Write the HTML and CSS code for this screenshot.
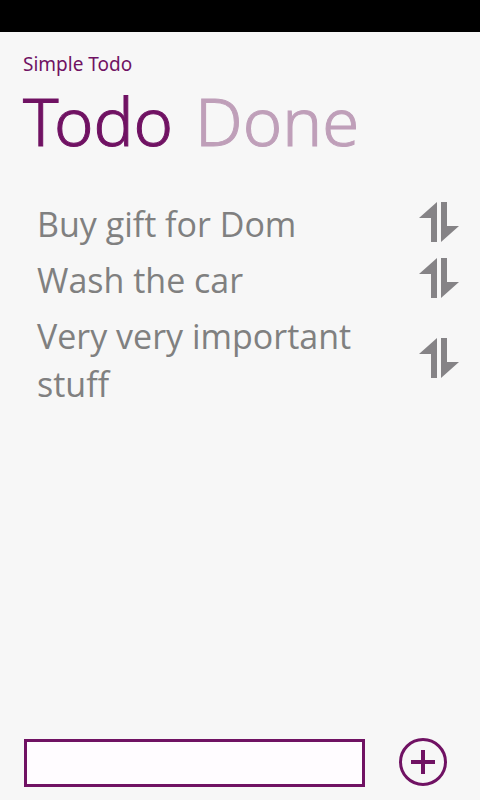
FILE: index.html
```html
<!DOCTYPE html>
<html lang="en">
<head>
<meta charset="utf-8">
<meta name="viewport" content="width=device-width, initial-scale=1">
<title>Simple Todo</title>
<link rel="stylesheet" href="styles.css">
</head>
<body>
<div class="status-bar"></div>
<header class="header">
  <h1 class="app-title">Simple Todo</h1>
  <nav class="pivot">
    <a class="pivot-item active" href="#todo">Todo</a>
    <a class="pivot-item" href="#done">Done</a>
  </nav>
</header>
<main class="content">
  <ul class="list">
    <li class="item"><span class="item-text">Buy gift for Dom</span><button class="sort" aria-label="Reorder"><svg viewBox="0 0 40 40"><path d="M18 0V40H12V16H0ZM22 0H28V24H40L22 40Z"/></svg></button></li>
    <li class="item"><span class="item-text">Wash the car</span><button class="sort" aria-label="Reorder"><svg viewBox="0 0 40 40"><path d="M18 0V40H12V16H0ZM22 0H28V24H40L22 40Z"/></svg></button></li>
    <li class="item"><span class="item-text">Very very important stuff</span><button class="sort" aria-label="Reorder"><svg viewBox="0 0 40 40"><path d="M18 0V40H12V16H0ZM22 0H28V24H40L22 40Z"/></svg></button></li>
  </ul>
</main>
<form class="add-form">
  <input class="add-input" type="text" aria-label="New task">
  <button class="add-button" type="button" aria-label="Add"><svg viewBox="0 0 48 48"><circle cx="24" cy="24" r="22.5"/><path d="M24 12V36M12 24H36"/></svg></button>
</form>
</body>
</html>
```

FILE: styles.css
```css
* { box-sizing: border-box; }
body {
  margin: 0;
  min-height: 100vh;
  display: flex;
  flex-direction: column;
  background: #f7f7f7;
  color: #701263;
  font-family: "Segoe WP", "Segoe UI", "Noto Sans", "Open Sans", sans-serif;
}
.status-bar { height: 32px; background: #000; }
.header { padding: 20px 23px 0; }
.app-title { margin: 0; font-size: 19px; line-height: 24px; font-weight: 400; }
.pivot { display: flex; gap: 22px; line-height: 88px; font-size: 67px; font-weight: 300; -webkit-text-stroke: 1px; }
.pivot-item { color: #bf9fb9; text-decoration: none; }
.pivot-item.active { color: #701263; }
.content { flex: 1; padding: 36px 21px 0 37px; }
.list { margin: 0; padding: 0; list-style: none; display: grid; gap: 8px; }
.item { display: flex; align-items: center; justify-content: space-between; gap: 56px; color: #808080; font-family: "Segoe WP", "Segoe UI", "Open Sans", sans-serif; font-size: 34px; line-height: 48px; }
.sort { flex: none; width: 40px; height: 40px; margin-bottom: 5px; padding: 0; border: 0; background: none; }
.sort svg { display: block; fill: #858386; }
.add-form { display: flex; align-items: center; gap: 34px; padding: 0 33px 13px 24px; }
.add-input { flex: 1; min-width: 0; height: 48px; padding: 4px 8px; border: 3px solid #701263; border-radius: 0; background: #fffcff; color: #701263; font: inherit; font-size: 24px; }
.add-button { width: 48px; height: 48px; margin-bottom: 1px; padding: 0; border: 0; background: none; }
.add-button svg { display: block; fill: none; stroke: #701263; stroke-width: 3; }
.add-button path { stroke-width: 4; }
```
